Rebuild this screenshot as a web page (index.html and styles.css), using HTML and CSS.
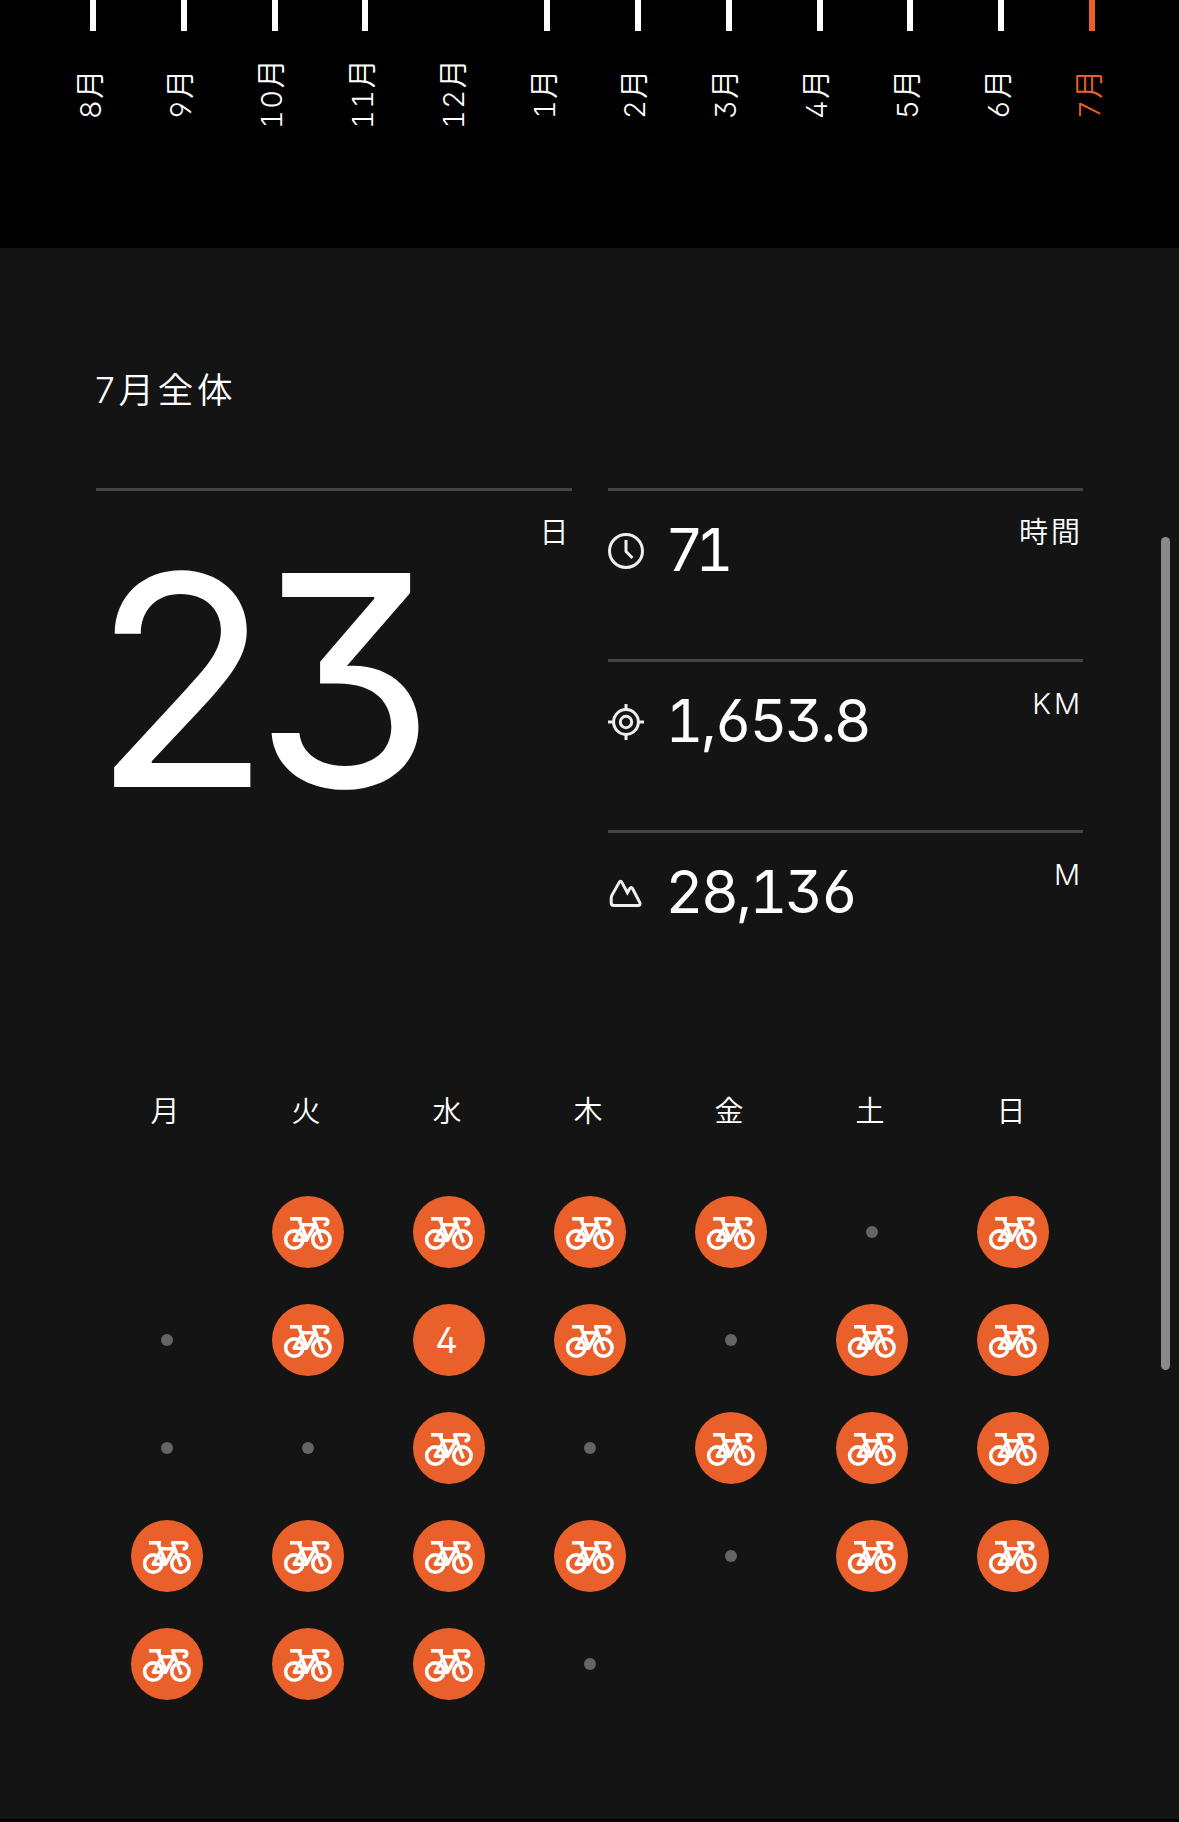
FILE: index.html
```html
<!DOCTYPE html>
<html lang="ja">
<head>
    <meta charset="UTF-8">
    <meta name="viewport" content="width=device-width, initial-scale=1.0">
    <title>7月全体</title>
    <link rel="stylesheet" href="styles.css">
</head>
<body>
    <!-- Shared icon -->
    <svg class="sprite" width="0" height="0">
        <symbol id="bike" viewBox="0 0 72 72">
            <g fill="none" stroke="#fff" stroke-width="3.6" stroke-linejoin="round">
                <circle cx="22.3" cy="43.6" r="8.7"/>
                <circle cx="49.4" cy="43.6" r="8.7"/>
                <path d="M18 22.8h12"/>
                <path d="M26.8 23l8.6 21"/>
                <path d="M29 28.8h14L34.5 44.2H22.3L29.6 31"/>
                <path d="M50.3 46.3L41.6 22.8h11.2c3.8 0 4.4 6-1.2 6"/>
            </g>
        </symbol>
    </svg>

    <!-- Month chart -->
    <header class="months">
        <div class="month"><i class="bar"></i><span>8月</span></div>
        <div class="month"><i class="bar"></i><span>9月</span></div>
        <div class="month"><i class="bar"></i><span>10月</span></div>
        <div class="month"><i class="bar"></i><span>11月</span></div>
        <div class="month"><i class="bar none"></i><span>12月</span></div>
        <div class="month"><i class="bar"></i><span>1月</span></div>
        <div class="month"><i class="bar"></i><span>2月</span></div>
        <div class="month"><i class="bar"></i><span>3月</span></div>
        <div class="month"><i class="bar"></i><span>4月</span></div>
        <div class="month"><i class="bar"></i><span>5月</span></div>
        <div class="month"><i class="bar"></i><span>6月</span></div>
        <div class="month active"><i class="bar"></i><span>7月</span></div>
    </header>

    <main class="panel">
        <h1>7月全体</h1>

        <!-- Totals -->
        <section class="stats">
            <div class="total">
                <span class="unit">日</span>
                <div class="days">23</div>
            </div>
            <div class="details">
                <div class="stat">
                    <svg class="icon" viewBox="0 0 36 36">
                        <circle cx="18" cy="18" r="16.5"/>
                        <path d="M18 7v11.5l6.500 6.500"/>
                    </svg>
                    <span class="value tight">71</span>
                    <span class="unit">時間</span>
                </div>
                <div class="stat">
                    <svg class="icon" viewBox="0 0 36 36">
                        <circle cx="18" cy="18" r="12.4"/>
                        <circle cx="18" cy="18" r="5.7"/>
                        <path d="M18 0v5M18 31v5M0 18h5M31 18h5"/>
                    </svg>
                    <span class="value">1,653.8</span>
                    <span class="unit">KM</span>
                </div>
                <div class="stat">
                    <svg class="icon" viewBox="0 0 36 36">
                        <path d="M11.200 7.400c.8-1.600 1.900-1.600 2.700 0L19.400 17.600l2.500-4.300c.7-1.200 1.800-1.200 2.500 0l7.400 14.300c.7 1.700 0 3-1.800 3H6c-1.900 0-2.800-1.200-2.800-3v-4.500c0-1 .3-2 .8-3z"/>
                    </svg>
                    <span class="value">28,136</span>
                    <span class="unit">M</span>
                </div>
            </div>
        </section>

        <!-- Calendar -->
        <section class="weekdays">
            <span>月</span><span>火</span><span>水</span><span>木</span><span>金</span><span>土</span><span>日</span>
        </section>
        <section class="calendar">
            <div></div>
            <div class="ride"><svg><use href="#bike"/></svg></div>
            <div class="ride"><svg><use href="#bike"/></svg></div>
            <div class="ride"><svg><use href="#bike"/></svg></div>
            <div class="ride"><svg><use href="#bike"/></svg></div>
            <div class="rest"></div>
            <div class="ride"><svg><use href="#bike"/></svg></div>

            <div class="rest"></div>
            <div class="ride"><svg><use href="#bike"/></svg></div>
            <div class="ride count">4</div>
            <div class="ride"><svg><use href="#bike"/></svg></div>
            <div class="rest"></div>
            <div class="ride"><svg><use href="#bike"/></svg></div>
            <div class="ride"><svg><use href="#bike"/></svg></div>

            <div class="rest"></div>
            <div class="rest"></div>
            <div class="ride"><svg><use href="#bike"/></svg></div>
            <div class="rest"></div>
            <div class="ride"><svg><use href="#bike"/></svg></div>
            <div class="ride"><svg><use href="#bike"/></svg></div>
            <div class="ride"><svg><use href="#bike"/></svg></div>

            <div class="ride"><svg><use href="#bike"/></svg></div>
            <div class="ride"><svg><use href="#bike"/></svg></div>
            <div class="ride"><svg><use href="#bike"/></svg></div>
            <div class="ride"><svg><use href="#bike"/></svg></div>
            <div class="rest"></div>
            <div class="ride"><svg><use href="#bike"/></svg></div>
            <div class="ride"><svg><use href="#bike"/></svg></div>

            <div class="ride"><svg><use href="#bike"/></svg></div>
            <div class="ride"><svg><use href="#bike"/></svg></div>
            <div class="ride"><svg><use href="#bike"/></svg></div>
            <div class="rest"></div>
        </section>
    </main>

    <div class="scrollbar"></div>
</body>
</html>
```
FILE: styles.css
```css
* {
    box-sizing: border-box;
}

body {
    margin: 0;
    height: 1822px;
    overflow: hidden;
    background: #000;
    color: #fff;
    font-family: Inter, "Noto Sans CJK JP", sans-serif;
    font-weight: 350;
    font-feature-settings: "tnum", "ss01", "cv09", "cv02", "cv03", "cv04";
}

.sprite {
    position: absolute;
}

/* Month chart */
.months {
    display: grid;
    grid-template-columns: repeat(12, 90.83px);
    height: 248px;
    padding-left: 47.6px;
}

.month {
    display: flex;
    flex-direction: column;
    align-items: center;
}

.bar {
    width: 6px;
    height: 31px;
    background: #fff;
}

.bar.none {
    background: transparent;
}

.month span {
    display: flex;
    justify-content: center;
    width: 44px;
    height: 125px;
    margin-right: 5px;
    line-height: 44px;
    font-size: 29px;
    letter-spacing: 1.6px;
    writing-mode: vertical-rl;
    text-orientation: sideways;
    transform: rotate(180deg);
}

.month.active {
    color: #ea602a;
}

.month.active .bar {
    background: #ea602a;
}

/* Summary panel */
.panel {
    height: 1571px;
    padding: 117px 96px 0;
    background: #141414;
}

h1 {
    margin: 0 0 71px -1px;
    height: 52px;
    line-height: 52px;
    font-size: 35.5px;
    font-weight: 350;
    letter-spacing: 3.7px;
    font-feature-settings: normal;
}

.stats {
    display: grid;
    grid-template-columns: 1fr 1fr;
    gap: 36px;
    height: 513px;
}

.total,
.stat {
    border-top: 3px solid #444;
}

.total {
    display: flex;
    flex-direction: column;
}

.unit {
    padding-top: 22px;
    line-height: 40px;
    font-size: 29px;
    letter-spacing: 3px;
    text-align: right;
}

.days {
    margin: -23px 0 0 -9px;
    line-height: 300px;
    font-size: 294px;
    font-weight: 400;
    letter-spacing: -24px;
}

.stat {
    display: flex;
    align-items: flex-start;
    height: 171px;
}

.icon {
    width: 36px;
    height: 36px;
    margin-top: 42px;
    fill: none;
    stroke: #eee;
    stroke-width: 3;
}

.value {
    flex: 1;
    margin: 29px 0 0 22px;
    line-height: 60px;
    font-size: 58.5px;
    font-weight: 400;
    letter-spacing: -2.5px;
}

.value.tight {
    letter-spacing: -8px;
}

/* Calendar */
.weekdays,
.calendar {
    display: grid;
    grid-template-columns: repeat(7, 1fr);
    justify-items: center;
    align-items: center;
}

.weekdays {
    margin-top: 87px;
    height: 40px;
    font-size: 29px;
    letter-spacing: 3px;
}

.calendar {
    margin-top: 50px;
    grid-auto-rows: 108px;
}

.ride {
    width: 72px;
    height: 72px;
    border-radius: 50%;
    background: #ea602a;
}

.ride svg {
    display: block;
    width: 72px;
    height: 72px;
}

.count {
    line-height: 72px;
    font-size: 35px;
    font-weight: 400;
    text-align: center;
    letter-spacing: 4px;
}

.rest {
    width: 12px;
    height: 12px;
    border-radius: 50%;
    background: #666462;
}

.scrollbar {
    position: absolute;
    top: 537px;
    right: 9px;
    width: 9px;
    height: 833px;
    border-radius: 5px;
    background: #8a8a8a;
}
```
